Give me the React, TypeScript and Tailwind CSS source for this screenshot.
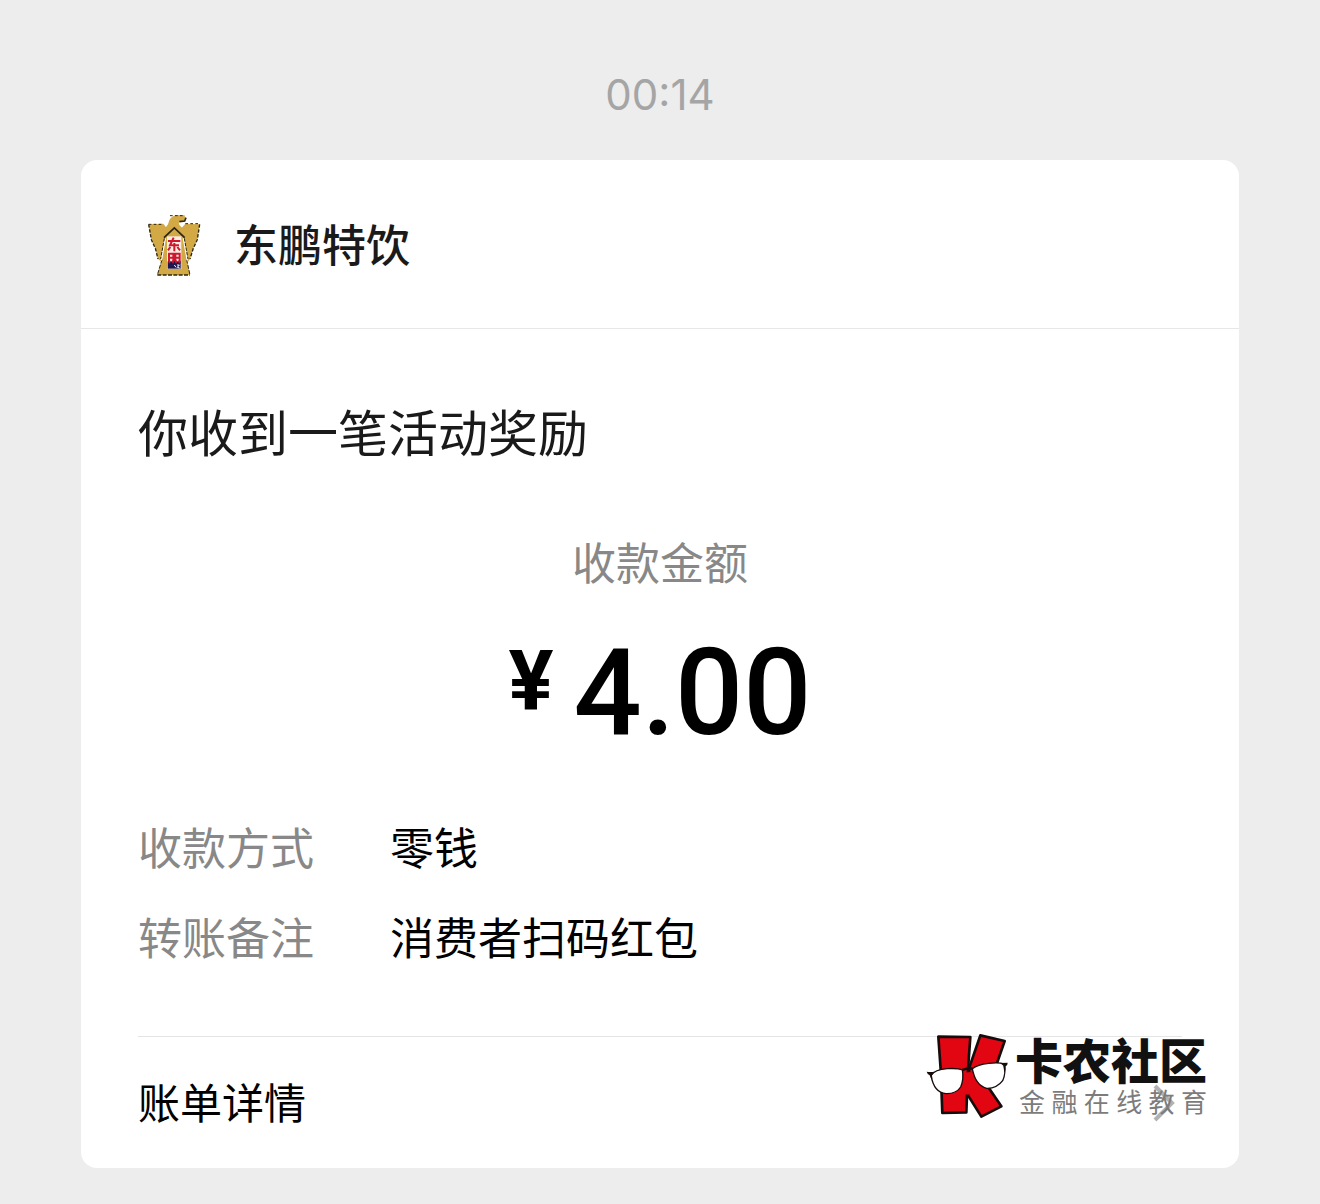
const details = [
  { label: "收款方式", value: "零钱" },
  { label: "转账备注", value: "消费者扫码红包" },
];

const MerchantLogo = () => (
  <svg viewBox="-6 -3 216 216" className="h-[72px] w-[72px]" aria-hidden="true">
    <g fill="#d2a945">
      <path d="M26 46 L70 44 L84 62 L82 92 L72 130 L64 158 L54 150 L46 118 L34 92 Z" />
      <path d="M179 46 L136 44 L120 62 L124 92 L134 130 L144 158 L150 150 L160 118 L172 92 Z" />
      <path d="M103 58 L76 82 L66 152 L52 198 L150 198 L140 152 L130 82 Z" />
      <path d="M84 46 Q88 20 112 18 L134 19 Q138 27 132 36 L122 36 Q112 42 120 50 L134 64 L128 80 L103 58 L78 80 L72 62 Z" />
    </g>
    <g fill="none" stroke="#2b2412" strokeWidth="4">
      <path d="M26 46 L34 92 L46 118 L54 150" strokeDasharray="10 5" />
      <path d="M179 46 L172 92 L160 118 L150 150" strokeDasharray="10 5" />
      <path d="M52 198 H150" strokeDasharray="12 4" />
      <path d="M66 152 L52 198 M140 152 L150 198" strokeDasharray="12 4" strokeWidth="3" />
      <path d="M26 46 H70 M136 44 H179 M90 20 H128" strokeDasharray="8 7" strokeWidth="3" />
      <path d="M72 86 L103 57 L134 86" strokeWidth="5" />
      <path d="M118 38 L134 36 L138 26" strokeWidth="5" />
    </g>
    <path d="M76 88 L64 154 M130 88 L142 154" fill="none" stroke="#fff" strokeWidth="4" />
    <path d="M73 88 L62 150 M133 88 L144 150" fill="none" stroke="#2b2412" strokeWidth="3" strokeDasharray="10 4" />
    <path d="M81 82 H124 V180 H81 Z" fill="#f8eee2" />
    <g fill="none" stroke="#cf1830" strokeWidth="6">
      <path d="M84 96 H121 M101 86 L90 109 H117 M103 102 V127 M91 114 L84 124 M112 114 L120 124" />
      <path d="M87 164 V134 H100 V164 M87 146 H100 M106 164 V134 H119 V164 M106 146 H119" />
    </g>
    <path d="M83 157 H122 V179 H83 Z" fill="#1d174d" />
    <path d="M88 154 V163 M99 154 V163 M108 154 V163 M118 154 V163" stroke="#cf1830" strokeWidth="5" />
    <path d="M103 168 L108 175 M111 168 H118 L112 175 L119 177" fill="none" stroke="#fff" strokeWidth="3" />
  </svg>
);

const CommunityLogo = () => (
  <svg viewBox="15 21 252 255" className="h-[85px] w-[84px]" aria-hidden="true">
    <g fill="#e20613" stroke="#160c0c" strokeWidth="8" strokeLinejoin="round">
      <path d="M55 32 L151 33 L144 130 L139 259 L67 261 L62 130 Z" />
      <path d="M181 28 L254 45 L228 120 L204 182 L244 241 L184 272 L144 208 L148 124 Z" />
    </g>
    <path d="M128 140 L152 138 L160 200 L144 206 L130 204 Z" fill="#e20613" />
    <g fill="#fff" stroke="#160c0c" strokeWidth="4" strokeLinejoin="round">
      <path d="M33 148 Q44 131 82 128 Q114 126 127 132 Q132 160 122 183 Q108 204 78 203 Q42 200 33 148 Z" />
      <path d="M157 128 Q172 116 206 112 Q240 109 252 114 Q259 140 248 164 Q230 188 200 187 Q166 178 157 128 Z" />
    </g>
    <path d="M20 137 Q30 139 44 137 L36 148 L37 160 Q32 158 29 148 Q22 145 20 137 Z" fill="#160c0c" />
    <path d="M240 111 L263 110 Q263 119 257 121 Q258 134 253 140 L250 119 Z" fill="#160c0c" />
    <path d="M127 132 Q141 126 157 128" fill="none" stroke="#160c0c" strokeWidth="8" />
  </svg>
);

const Watermark = () => (
  <div className="pointer-events-none absolute right-8 bottom-[50px] flex gap-1.5 font-['Liberation_Sans','Noto_Sans_CJK_SC',sans-serif]">
    <CommunityLogo />
    <div className="pt-1">
      <p className="text-[48px] leading-[52px] font-black text-[#111]">卡农社区</p>
      <p className="flex justify-between pl-1 text-[26px] leading-[28px] text-[#7c7c7c]">
        {[..."金融在线教育"].map((char) => (
          <span key={char}>{char}</span>
        ))}
      </p>
    </div>
  </div>
);

const App = () => {
  return (
    <main className="min-h-screen bg-[#ededed] px-[81px] pt-[65px] pb-9 font-['Noto_Sans_CJK_SC',sans-serif] text-black">
      <time className="block text-center font-['Inter',sans-serif] text-[42px] leading-[60px] text-[#a5a5a5]">
        00:14
      </time>

      <article className="relative mt-[35px] rounded-2xl bg-white">
        <header className="flex h-[169px] items-center gap-6 border-b border-[#e7e7e7] px-[57px]">
          <MerchantLogo />
          <h1 className="pb-0.5 text-[44px] leading-[60px] font-medium text-[#1a1a1a]">东鹏特饮</h1>
        </header>

        <div className="px-[57px] pt-[71px]">
          <h2 className="text-[50px] leading-[60px] text-[#1a1a1a]">你收到一笔活动奖励</h2>

          <p className="mt-[71px] text-center text-[44px] leading-[60px] text-[#888]">收款金额</p>
          <p className="mt-[42px] flex items-start justify-center gap-5 font-['Roboto',sans-serif]">
            <span className="text-[84px] leading-[98px] font-bold">¥</span>
            <span className="text-[120px] leading-[120px] font-medium">4.00</span>
          </p>

          <dl className="mt-[63px] space-y-[30px] text-[44px] leading-[60px]">
            {details.map((item) => (
              <div className="flex" key={item.label}>
                <dt className="w-[252px] text-[#888]">{item.label}</dt>
                <dd>{item.value}</dd>
              </div>
            ))}
          </dl>

          <a href="#bill" className="mt-[70px] flex h-[132px] items-center justify-between border-t border-[#e5e5e5] text-[42px]">
            <span className="pb-1">账单详情</span>
            <svg viewBox="0 0 24 40" className="mr-1.5 h-10 w-6" fill="none" stroke="#b2b2b2" strokeWidth="4" aria-hidden="true">
              <path d="M3 3 L20 20 L3 37" />
            </svg>
          </a>
        </div>

        <Watermark />
      </article>
    </main>
  );
};

export default App;
